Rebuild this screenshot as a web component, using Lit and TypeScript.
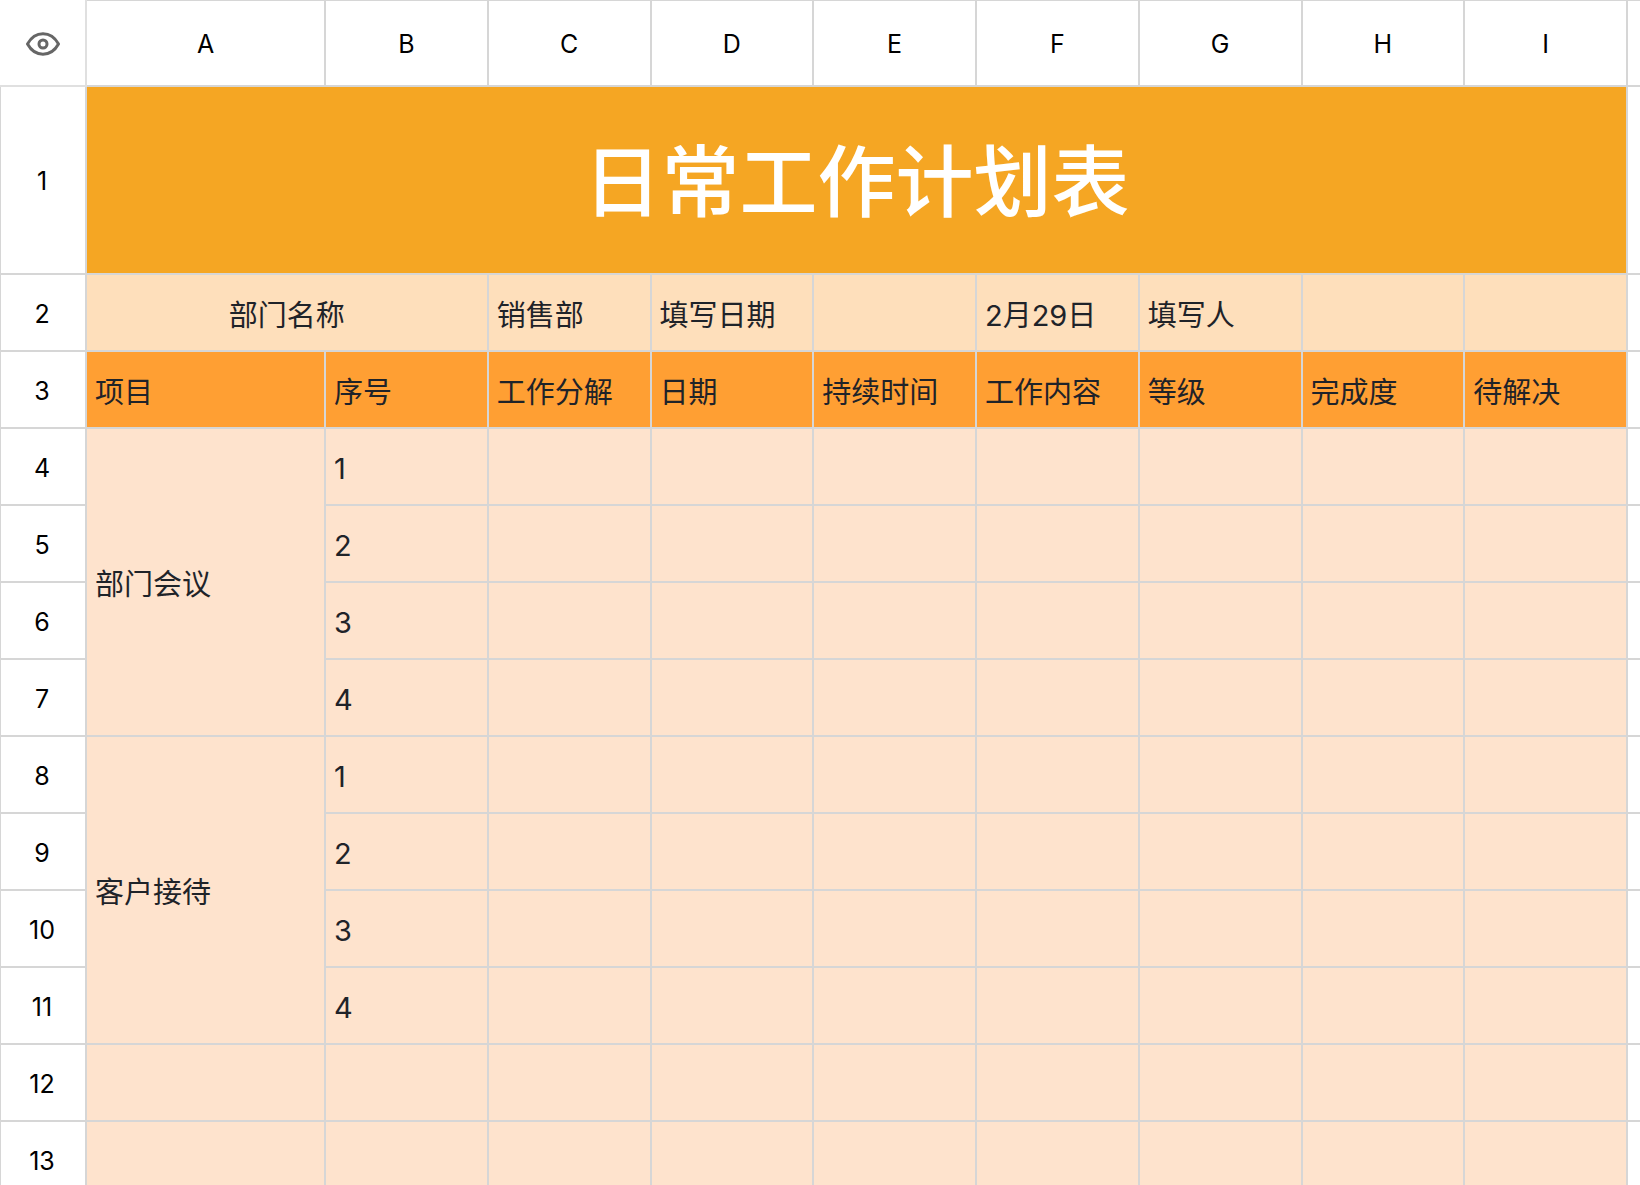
import { LitElement, html, css } from "lit";
import { customElement, property } from "lit/decorators.js";

interface Cell {
  text?: string;
  colSpan?: number;
  rowSpan?: number;
  center?: boolean;
}

interface Row {
  kind: "title" | "info" | "head" | "body";
  cells: Cell[];
}

const COLUMNS = ["A", "B", "C", "D", "E", "F", "G", "H", "I"];

const texts = (...values: string[]): Cell[] => values.map((text) => ({ text }));
const blanks = (count: number): Cell[] => Array.from({ length: count }, () => ({}));

const group = (name: string): Row[] =>
  ["1", "2", "3", "4"].map((no, i) => ({
    kind: "body",
    cells: [...(i === 0 ? [{ text: name, rowSpan: 4 }] : []), { text: no }, ...blanks(7)],
  }));

const ROWS: Row[] = [
  { kind: "title", cells: [{ text: "日常工作计划表", colSpan: 9, center: true }] },
  {
    kind: "info",
    cells: [
      { text: "部门名称", colSpan: 2, center: true },
      ...texts("销售部", "填写日期", "", "2月29日", "填写人", "", ""),
    ],
  },
  {
    kind: "head",
    cells: texts("项目", "序号", "工作分解", "日期", "持续时间", "工作内容", "等级", "完成度", "待解决"),
  },
  ...group("部门会议"),
  ...group("客户接待"),
  { kind: "body", cells: blanks(9) },
  { kind: "body", cells: blanks(9) },
];

@customElement("eye-icon")
export class EyeIcon extends LitElement {
  static styles = css`
    :host {
      display: block;
    }
    .icon {
      display: block;
      width: 36px;
      height: 26px;
      fill: none;
      stroke: #666;
      stroke-width: 3;
      stroke-linejoin: round;
    }
  `;

  render() {
    return html`<svg class="icon" viewBox="0 0 36 26" aria-hidden="true">
      <path d="M2.5 13C6.4 6 11.8 2.8 18 2.8S29.6 6 33.5 13C29.6 20 24.2 23.200 18 23.200S6.4 20 2.5 13Z" />
      <circle cx="18" cy="13" r="4" />
    </svg>`;
  }
}

@customElement("plan-sheet")
export class PlanSheet extends LitElement {
  @property({ attribute: false }) rows: Row[] = [];

  static styles = css`
    :host {
      display: block;
    }
    .sheet {
      width: 100%;
      table-layout: fixed;
      border-collapse: separate;
      border-spacing: 0;
      color: #1f2329;
    }
    .col-index {
      width: 87px;
    }
    .col-a {
      width: 239px;
    }
    .col-next {
      width: 12px;
    }
    th,
    td {
      box-sizing: border-box;
      height: 77px;
      padding: 4px 8px 0;
      border: 0 solid #d6d6d6;
      border-width: 0 2px 2px 0;
      font-size: 29px;
      font-weight: 400;
      line-height: 40px;
      text-align: left;
      vertical-align: middle;
      white-space: nowrap;
    }
    .corner,
    .letter,
    .index,
    .next {
      padding: 2px 0 0;
      background: #fff;
      color: #000;
      font-size: 25px;
      text-align: center;
    }
    .corner {
      height: 87px;
      border-color: #e0e0e0;
    }
    .letter {
      border-top-width: 1px;
    }
    .index {
      padding-right: 2px;
      border-left-width: 1px;
    }
    .next {
      border-right-width: 0;
    }
    .toggle {
      display: block;
      margin: 0 auto;
      padding: 0;
      border: 0;
      background: none;
      cursor: pointer;
    }
    .title > * {
      height: 188px;
    }
    .title .cell {
      padding-top: 6px;
      background: #f5a623;
      color: #fff;
      font-size: 78px;
      font-weight: 500;
      line-height: 112px;
    }
    .info .cell {
      padding-top: 6px;
      background: #fedfbb;
    }
    .head .cell {
      padding-top: 6px;
      background: #ff9f33;
    }
    .body .cell {
      background: #fee3cd;
    }
    .body .cell[rowspan="4"] {
      padding-top: 6px;
    }
    .cell.center {
      text-align: center;
    }
  `;

  render() {
    return html`<table class="sheet">
      <colgroup>
        <col class="col-index" />
        ${COLUMNS.map((name) => html`<col class=${name === "A" ? "col-a" : "col"} />`)}
        <col class="col-next" />
      </colgroup>
      <thead>
        <tr>
          <td class="corner">
            <button class="toggle" type="button" aria-label="显示"><eye-icon></eye-icon></button>
          </td>
          ${COLUMNS.map((name) => html`<th class="letter" scope="col">${name}</th>`)}
          <td class="letter next"></td>
        </tr>
      </thead>
      <tbody>
        ${this.rows.map(
          (row, i) => html`<tr class=${row.kind}>
            <th class="index" scope="row">${i + 1}</th>
            ${row.cells.map(
              (cell) => html`<td
                class=${cell.center ? "cell center" : "cell"}
                colspan=${cell.colSpan ?? 1}
                rowspan=${cell.rowSpan ?? 1}
              >${cell.text ?? ""}</td>`
            )}
            <td class="next"></td>
          </tr>`
        )}
      </tbody>
    </table>`;
  }
}

@customElement("app-root")
export class AppRoot extends LitElement {
  static styles = css`
    :host {
      display: block;
      height: 100vh;
      overflow: auto;
      scrollbar-width: none;
      background: #fff;
      font-family: Inter, "Noto Sans CJK SC", sans-serif;
    }
  `;

  render() {
    return html`<plan-sheet .rows=${ROWS}></plan-sheet>`;
  }
}
